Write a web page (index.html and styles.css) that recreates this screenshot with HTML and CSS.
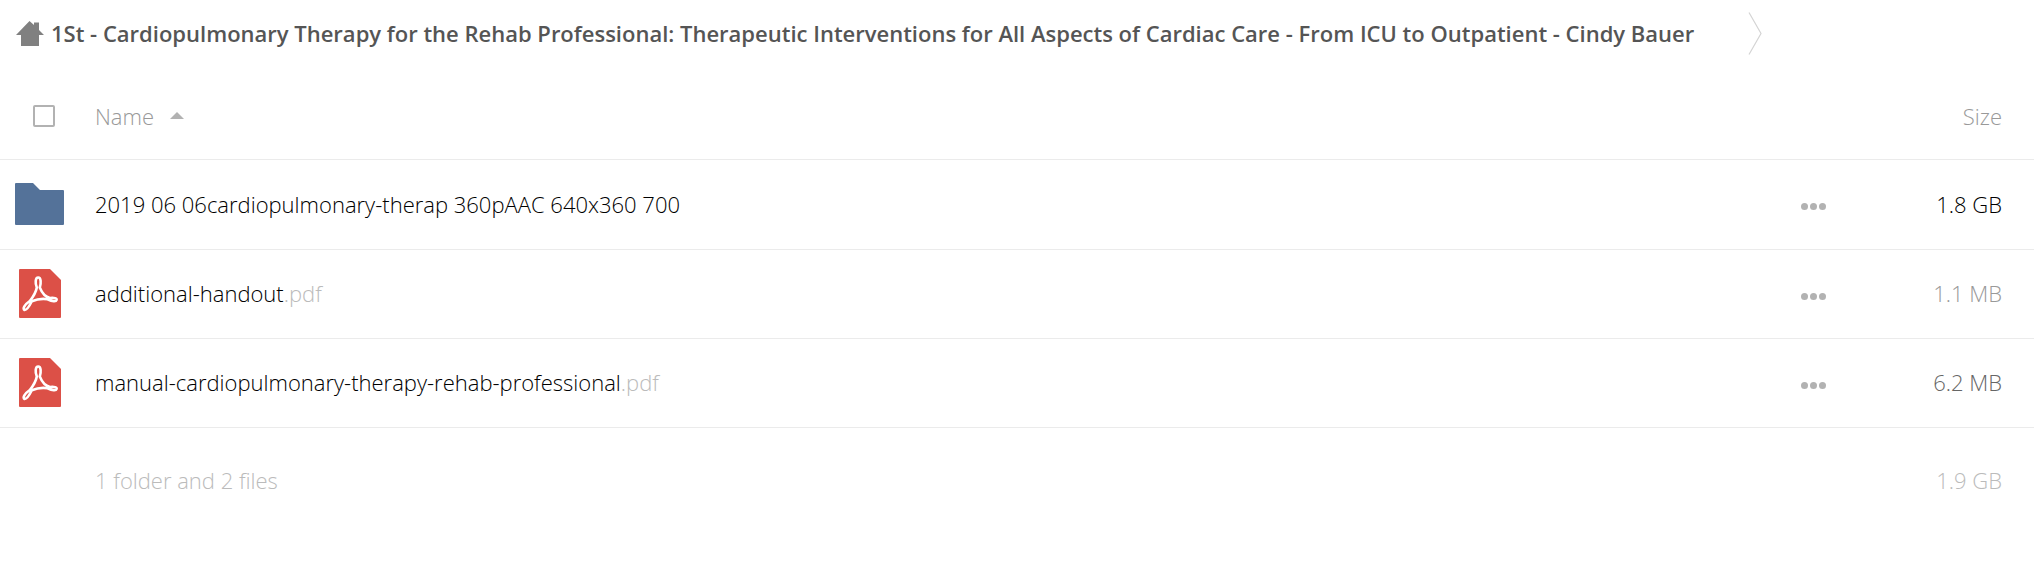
FILE: index.html
```html
<!DOCTYPE html>
<html lang="en">
<head>
<meta charset="utf-8">
<meta name="viewport" content="width=device-width, initial-scale=1">
<title>Files</title>
<link rel="stylesheet" href="styles.css">
</head>
<body>
<svg class="defs" aria-hidden="true">
  <symbol id="pdf" viewBox="0 0 42 49">
    <path fill="#dc5047" d="M1 0h30l11 11v37a1 1 0 0 1-1 1H1a1 1 0 0 1-1-1V1a1 1 0 0 1 1-1z"/>
    <path fill="none" stroke="#fff" stroke-width="2.6" stroke-linejoin="round" d="M17.800 18.500C16 14 16.300 8.500 19.200 8.500S22.200 14 20.800 18.500C23 24 26.500 28 31 29C35.500 28.500 38 29.300 37.600 31C37 33 33.500 32.500 28.500 30.200C23.500 29.400 17.500 30.300 12.800 32.300C10.500 37 7.500 41.200 5.500 41C3.500 40 5 36 10.800 32C14.500 27.500 17 23 17.800 18.500z"/>
  </symbol>
  <symbol id="dots" viewBox="0 0 25 7">
    <circle cx="3.500" cy="3.500" r="3.500"/><circle cx="12.500" cy="3.500" r="3.500"/><circle cx="21.500" cy="3.500" r="3.500"/>
  </symbol>
</svg>
<nav class="crumbs" aria-label="Breadcrumb">
  <a class="home" href="#" aria-label="Home">
    <svg viewBox="0 0 28 25" width="28" height="25"><path fill="#808080" d="M0 14 13.500 0 18 4V1.500h5V9l5 5h-5v11H5V14z"/></svg>
  </a>
  <a class="crumb" href="#">1St - Cardiopulmonary Therapy for the Rehab Professional: Therapeutic Interventions for All Aspects of Cardiac Care - From ICU to Outpatient - Cindy Bauer</a>
  <svg class="sep" viewBox="0 0 14 43" width="14" height="43" aria-hidden="true"><path fill="none" stroke="#d4d4d4" stroke-width="1.200" d="M1 0.500 13 21.500 1 42.500"/></svg>
</nav>
<table class="files">
  <thead>
    <tr>
      <th class="icon"><input class="check" type="checkbox" aria-label="Select all"></th>
      <th class="name"><button class="sort" type="button">Name <svg viewBox="0 0 14 7" width="14" height="7" aria-hidden="true"><path fill="#b2b2b2" d="M0 7 7 0l7 7z"/></svg></button></th>
      <th class="actions"></th>
      <th class="size">Size</th>
    </tr>
  </thead>
  <tbody>
    <tr>
      <td class="icon"><svg class="folder" viewBox="0 0 49 42" width="49" height="42" aria-hidden="true"><path fill="#547299" d="M1 0h17l7 7h23a1 1 0 0 1 1 1v33a1 1 0 0 1-1 1H1a1 1 0 0 1-1-1V1a1 1 0 0 1 1-1z"/></svg></td>
      <td class="name"><a href="#">2019 06 06cardiopulmonary-therap 360pAAC 640x360 700</a></td>
      <td class="actions"><button class="more" type="button" aria-label="More actions"><svg width="25" height="7"><use href="#dots"/></svg></button></td>
      <td class="size large">1.8 GB</td>
    </tr>
    <tr>
      <td class="icon"><svg class="pdf" width="42" height="49" aria-hidden="true"><use href="#pdf"/></svg></td>
      <td class="name"><a href="#">additional-handout<span class="ext">.pdf</span></a></td>
      <td class="actions"><button class="more" type="button" aria-label="More actions"><svg width="25" height="7"><use href="#dots"/></svg></button></td>
      <td class="size small">1.1 MB</td>
    </tr>
    <tr>
      <td class="icon"><svg class="pdf" width="42" height="49" aria-hidden="true"><use href="#pdf"/></svg></td>
      <td class="name"><a href="#">manual-cardiopulmonary-therapy-rehab-professional<span class="ext">.pdf</span></a></td>
      <td class="actions"><button class="more" type="button" aria-label="More actions"><svg width="25" height="7"><use href="#dots"/></svg></button></td>
      <td class="size medium">6.2 MB</td>
    </tr>
  </tbody>
  <tfoot>
    <tr>
      <td class="icon"></td>
      <td class="name">1 folder and 2 files</td>
      <td class="actions"></td>
      <td class="size">1.9 GB</td>
    </tr>
  </tfoot>
</table>
</body>
</html>
```
FILE: styles.css
```css
* { box-sizing: border-box; }
body {
  margin: 0;
  background: #fff;
  color: #000;
  font: 300 22px/30px "Open Sans", sans-serif;
}
a { color: inherit; text-decoration: none; }
button {
  padding: 0;
  border: 0;
  background: none;
  color: inherit;
  font: inherit;
  cursor: pointer;
}
svg { display: block; }
.defs { position: absolute; width: 0; height: 0; }

.crumbs {
  display: flex;
  align-items: center;
  height: 66px;
  padding: 0 16px;
}
.home { margin-right: 7px; }
.crumb {
  color: #555;
  font-weight: 600;
  white-space: nowrap;
}
.sep { margin-left: 54px; }

.files {
  width: 100%;
  border-collapse: separate;
  border-spacing: 0;
  table-layout: fixed;
}
th, td {
  height: 89px;
  padding: 0 0 2px;
  border-bottom: 1px solid #ebebeb;
  font-weight: inherit;
  text-align: left;
  vertical-align: middle;
}
thead th { height: 94px; padding: 6px 0 0; color: #999; }
tbody tr:first-child td { height: 90px; }
tfoot td { height: 106px; border: 0; color: #bbb; }
th.icon, td.icon { width: 95px; }
th.actions, td.actions { width: 99px; }
th.size, td.size { width: 134px; padding-right: 32px; text-align: right; }
.folder { margin-left: 15px; }
.pdf { margin-left: 19px; }
.check {
  appearance: none;
  display: block;
  width: 22px;
  height: 22px;
  margin: 0 0 0 33px;
  border: 2px solid #b2b2b2;
  border-radius: 2px;
}
.sort { display: flex; align-items: center; gap: 16px; }
.more { display: block; padding: 16px 0 10px; fill: #b2b2b2; }
.ext { color: #bbb; }
.small { color: #999; }
.medium { color: #666; }
```
